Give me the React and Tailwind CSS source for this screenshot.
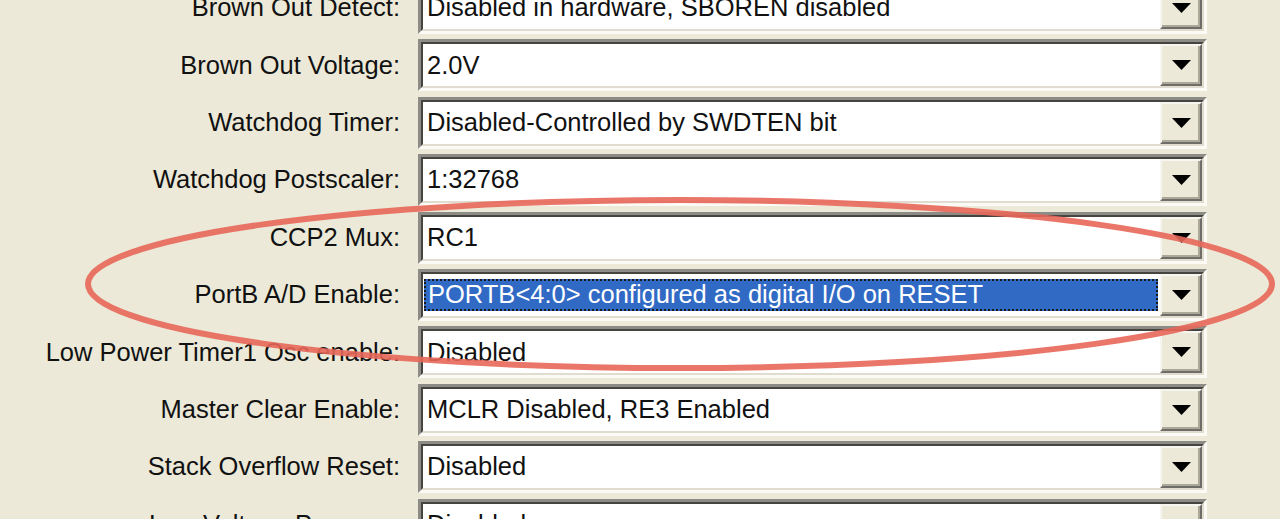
const rows = [
  { label: "Brown Out Detect:", value: "Disabled in hardware, SBOREN disabled" },
  { label: "Brown Out Voltage:", value: "2.0V" },
  { label: "Watchdog Timer:", value: "Disabled-Controlled by SWDTEN bit" },
  { label: "Watchdog Postscaler:", value: "1:32768" },
  { label: "CCP2 Mux:", value: "RC1" },
  { label: "PortB A/D Enable:", value: "PORTB<4:0> configured as digital I/O on RESET", selected: true },
  { label: "Low Power Timer1 Osc enable:", value: "Disabled" },
  { label: "Master Clear Enable:", value: "MCLR Disabled, RE3 Enabled" },
  { label: "Stack Overflow Reset:", value: "Disabled" },
  { label: "Low Voltage Program:", value: "Disabled" },
];

function Combo({ value, selected }) {
  return (
    <div className="ml-[18px] w-[789px] h-[52px] border-[3px] border-t-[#8c8b86] border-l-[#8c8b86] border-b-[#fbfaf5] border-r-[#fbfaf5]">
      <div className="flex h-full border-[2px] border-t-[#45443f] border-l-[#45443f] border-b-[#e0ddd0] border-r-[#e0ddd0] bg-white">
        <div className="flex flex-1 items-center pl-[1px] pr-[2px]">
          {selected ? (
            <div className="flex h-[32px] w-full items-center border-[2px] border-dotted border-[#1a1a1a] bg-[#316ac5] pl-[2px] text-white">
              {value}
            </div>
          ) : (
            <span className="pl-[3px] text-[#111]">{value}</span>
          )}
        </div>
        <div className="flex w-[42px] items-center justify-center border-[2px] border-t-[#f6f5f0] border-l-[#f6f5f0] border-b-[#6e6d68] border-r-[#6e6d68] bg-[#ece9d8] shadow-[inset_-2px_-2px_0_#aca899]">
          <svg width="19" height="10" viewBox="0 0 19 10">
            <polygon points="0,0 19,0 9.5,10" fill="#000" />
          </svg>
        </div>
      </div>
    </div>
  );
}

export default function App() {
  return (
    <div
      className="relative h-[519px] w-[1280px] overflow-hidden bg-[#ece9d8] text-[25.5px] leading-none"
      style={{ fontFamily: '"Liberation Sans", Arial, sans-serif' }}
    >
      <div className="mt-[-18px] flex flex-col gap-[5.4px]">
        {rows.map((r) => (
          <div key={r.label} className="flex items-center">
            <div className="w-[400px] text-right text-[#111]">{r.label}</div>
            <Combo value={r.value} selected={r.selected} />
          </div>
        ))}
      </div>

      {/* red annotation ellipse */}
      <svg className="pointer-events-none absolute left-0 top-0" width="1280" height="519">
        <ellipse cx="680" cy="284" rx="592" ry="84" fill="none" stroke="#e8675a" strokeWidth="6" opacity="0.9" />
      </svg>
    </div>
  );
}
